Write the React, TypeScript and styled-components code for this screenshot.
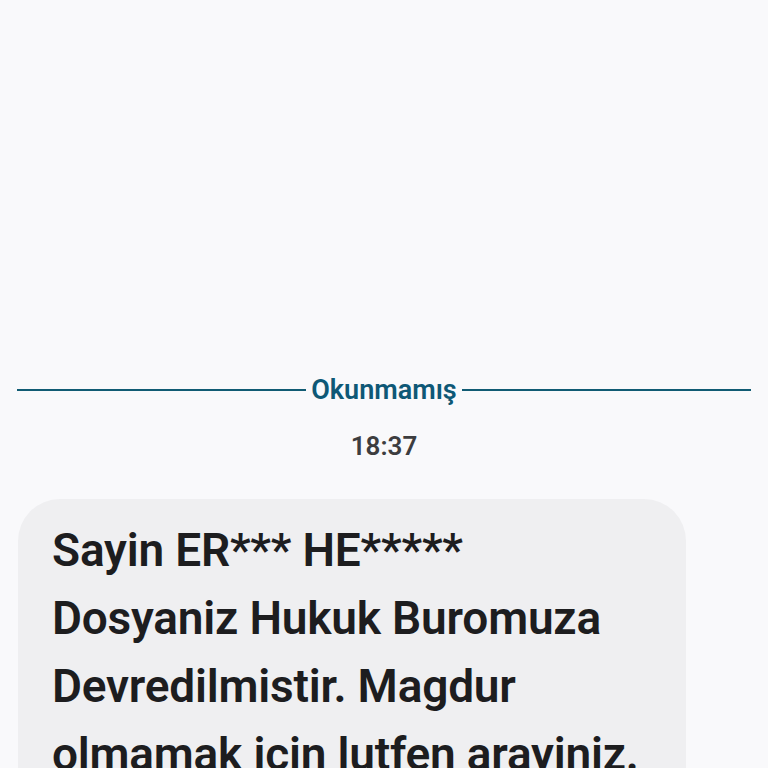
import styled, { createGlobalStyle } from "styled-components";

const GlobalStyle = createGlobalStyle`
  html, body {
    margin: 0;
    padding: 0;
    background: #f9f9fb;
    font-family: Roboto, "Noto Sans", "Liberation Sans", sans-serif;
  }
`;

const Page = styled.div`
  width: 768px;
  height: 768px;
  overflow: hidden;
  display: flex;
  flex-direction: column;
  padding-top: 374px;
  box-sizing: border-box;
`;

const Divider = styled.div`
  display: flex;
  align-items: center;
  padding: 0 17px 0 17px;
  height: 34px;
`;

const Line = styled.div`
  flex: 1;
  height: 2px;
  background: #115b73;
`;

const DividerLabel = styled.span`
  padding: 0 5px;
  font-size: 27px;
  font-weight: 600;
  color: #0e5876;
`;

const Time = styled.div`
  margin-top: 23px;
  text-align: center;
  font-size: 26px;
  font-weight: 600;
  color: #3d3d3f;
  line-height: 34px;
`;

const Bubble = styled.div`
  margin: 36px 0 0 18px;
  width: 668px;
  box-sizing: border-box;
  background: #efeff1;
  border-radius: 42px;
  padding: 17px 20px 24px 34px;
`;

const Message = styled.p`
  margin: 0;
  font-size: 46px;
  font-weight: 600;
  line-height: 68px;
  color: #1d1d1f;
  letter-spacing: -0.2px;
`;

export default function App() {
  return (
    <>
      <GlobalStyle />
      <Page>
        <Divider>
          <Line />
          <DividerLabel>Okunmamış</DividerLabel>
          <Line />
        </Divider>
        <Time>18:37</Time>
        <Bubble>
          <Message>
            Sayin ER*** HE*****
            <br />
            Dosyaniz Hukuk Buromuza Devredilmistir. Magdur olmamak icin lutfen
            arayiniz.
          </Message>
        </Bubble>
      </Page>
    </>
  );
}
